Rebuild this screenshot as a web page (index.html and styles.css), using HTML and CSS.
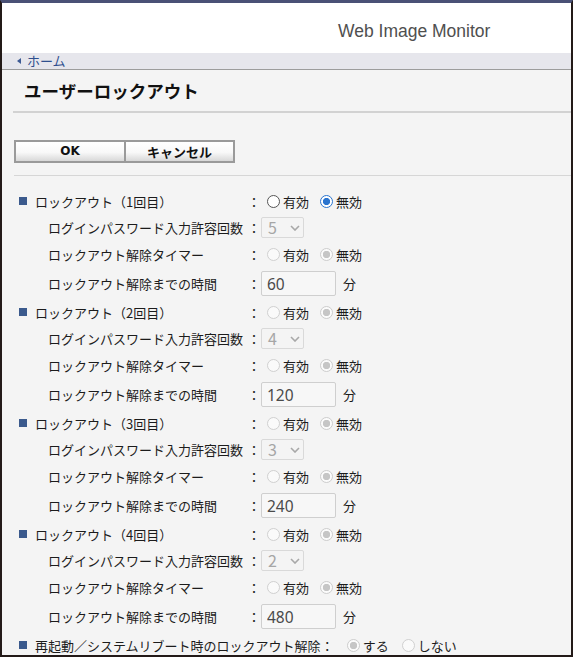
FILE: index.html
```html
<!DOCTYPE html>
<html lang="ja">
<head>
<meta charset="utf-8">
<title>ユーザーロックアウト</title>
<link rel="stylesheet" href="styles.css">
</head>
<body>
<div class="frame">
  <header class="top"><span class="brand">Web Image Monitor</span></header>
  <nav class="crumb"><span class="tri"></span><a class="home">ホーム</a></nav>
  <main class="content">
    <h1 class="title">ユーザーロックアウト</h1>
    <div class="buttons"><button class="btn ok">OK</button><button class="btn cancel">キャンセル</button></div>
    <div class="form">

      <section class="sec">
        <div class="row head"><span class="lbl">ロックアウト（1回目）</span><span class="colon">：</span>
          <span class="ctl"><label class="opt"><input type="radio" class="rd" name="l1"><span>有効</span></label><label class="opt"><input type="radio" class="rd" name="l1" checked><span>無効</span></label></span></div>
        <div class="row sub"><span class="lbl">ログインパスワード入力許容回数</span><span class="colon">：</span>
          <span class="ctl"><span class="sel">5<svg class="chev" viewBox="0 0 10 6" width="10" height="6"><path d="M1 1l4 4 4-4" fill="none" stroke="#a8a8a8" stroke-width="1.6"/></svg></span></span></div>
        <div class="row sub"><span class="lbl">ロックアウト解除タイマー</span><span class="colon">：</span>
          <span class="ctl"><label class="opt"><input type="radio" class="rd" name="t1" disabled><span>有効</span></label><label class="opt"><input type="radio" class="rd" name="t1" checked disabled><span>無効</span></label></span></div>
        <div class="row sub tall"><span class="lbl">ロックアウト解除までの時間</span><span class="colon">：</span>
          <span class="ctl"><input class="num" type="text" value="60"><span class="unit">分</span></span></div>
      </section>

      <section class="sec">
        <div class="row head"><span class="lbl">ロックアウト（2回目）</span><span class="colon">：</span>
          <span class="ctl"><label class="opt"><input type="radio" class="rd" name="l2" disabled><span>有効</span></label><label class="opt"><input type="radio" class="rd" name="l2" checked disabled><span>無効</span></label></span></div>
        <div class="row sub"><span class="lbl">ログインパスワード入力許容回数</span><span class="colon">：</span>
          <span class="ctl"><span class="sel">4<svg class="chev" viewBox="0 0 10 6" width="10" height="6"><path d="M1 1l4 4 4-4" fill="none" stroke="#a8a8a8" stroke-width="1.6"/></svg></span></span></div>
        <div class="row sub"><span class="lbl">ロックアウト解除タイマー</span><span class="colon">：</span>
          <span class="ctl"><label class="opt"><input type="radio" class="rd" name="t2" disabled><span>有効</span></label><label class="opt"><input type="radio" class="rd" name="t2" checked disabled><span>無効</span></label></span></div>
        <div class="row sub tall"><span class="lbl">ロックアウト解除までの時間</span><span class="colon">：</span>
          <span class="ctl"><input class="num" type="text" value="120"><span class="unit">分</span></span></div>
      </section>

      <section class="sec">
        <div class="row head"><span class="lbl">ロックアウト（3回目）</span><span class="colon">：</span>
          <span class="ctl"><label class="opt"><input type="radio" class="rd" name="l3" disabled><span>有効</span></label><label class="opt"><input type="radio" class="rd" name="l3" checked disabled><span>無効</span></label></span></div>
        <div class="row sub"><span class="lbl">ログインパスワード入力許容回数</span><span class="colon">：</span>
          <span class="ctl"><span class="sel">3<svg class="chev" viewBox="0 0 10 6" width="10" height="6"><path d="M1 1l4 4 4-4" fill="none" stroke="#a8a8a8" stroke-width="1.6"/></svg></span></span></div>
        <div class="row sub"><span class="lbl">ロックアウト解除タイマー</span><span class="colon">：</span>
          <span class="ctl"><label class="opt"><input type="radio" class="rd" name="t3" disabled><span>有効</span></label><label class="opt"><input type="radio" class="rd" name="t3" checked disabled><span>無効</span></label></span></div>
        <div class="row sub tall"><span class="lbl">ロックアウト解除までの時間</span><span class="colon">：</span>
          <span class="ctl"><input class="num" type="text" value="240"><span class="unit">分</span></span></div>
      </section>

      <section class="sec">
        <div class="row head"><span class="lbl">ロックアウト（4回目）</span><span class="colon">：</span>
          <span class="ctl"><label class="opt"><input type="radio" class="rd" name="l4" disabled><span>有効</span></label><label class="opt"><input type="radio" class="rd" name="l4" checked disabled><span>無効</span></label></span></div>
        <div class="row sub"><span class="lbl">ログインパスワード入力許容回数</span><span class="colon">：</span>
          <span class="ctl"><span class="sel">2<svg class="chev" viewBox="0 0 10 6" width="10" height="6"><path d="M1 1l4 4 4-4" fill="none" stroke="#a8a8a8" stroke-width="1.6"/></svg></span></span></div>
        <div class="row sub"><span class="lbl">ロックアウト解除タイマー</span><span class="colon">：</span>
          <span class="ctl"><label class="opt"><input type="radio" class="rd" name="t4" disabled><span>有効</span></label><label class="opt"><input type="radio" class="rd" name="t4" checked disabled><span>無効</span></label></span></div>
        <div class="row sub tall"><span class="lbl">ロックアウト解除までの時間</span><span class="colon">：</span>
          <span class="ctl"><input class="num" type="text" value="480"><span class="unit">分</span></span></div>
      </section>

      <div class="row head last"><span class="lbl auto">再起動／システムリブート時のロックアウト解除</span><span class="colon">：</span>
        <span class="ctl"><label class="opt"><input type="radio" class="rd" name="rb" checked disabled><span>する</span></label><label class="opt"><input type="radio" class="rd" name="rb" disabled><span>しない</span></label></span></div>

    </div>
  </main>
</div>
</body>
</html>
```
FILE: styles.css
```css
html, body {
  margin: 0;
  padding: 0;
  background: #f4f4f4;
}
body {
  font-family: "Noto Sans CJK JP", "Noto Sans", sans-serif;
  color: #1c1c1c;
  font-size: 13px;
}
.frame {
  width: 573px;
  height: 657px;
  box-sizing: border-box;
  border-left: 2px solid #231a18;
  border-right: 2px solid #231a18;
  border-bottom: 2px solid #231a18;
  border-top: 3px solid #4a5176;
  overflow: hidden;
  background: #f4f4f4;
}
.top {
  height: 44px;
  padding-top: 6px;
  background: #fff;
  display: flex;
  align-items: center;
  padding-left: 336px;
}
.brand {
  font-family: "Liberation Sans", Arial, sans-serif;
  font-size: 17.5px;
  color: #4f4f4f;
}
.crumb {
  height: 16px;
  background: #e6e6ec;
  border-bottom: 1px solid #9c9c9c;
  display: flex;
  align-items: center;
  padding-left: 15px;
  gap: 6px;
}
.tri {
  width: 0;
  height: 0;
  border-top: 3.5px solid transparent;
  border-bottom: 3.5px solid transparent;
  border-right: 4px solid #3d5a94;
}
.home {
  color: #2f4f8e;
  font-size: 13px;
  line-height: 16px;
}
.content {
  background: #f4f4f4;
}
.title {
  margin: 0 0 0 11px;
  height: 41px;
  line-height: 41px;
  padding-left: 11px;
  font-size: 17.5px;
  font-weight: bold;
  color: #111;
  border-bottom: 2px solid #d2d2d2;
}
.buttons {
  display: flex;
  margin: 27px 0 0 12px;
}
.btn {
  height: 23px;
  box-sizing: border-box;
  border: 2px solid #9a9a9a;
  background: linear-gradient(#ffffff 0%, #f8f8f8 55%, #d8d8d8 100%);
  font-family: "Noto Sans CJK JP", sans-serif;
  font-weight: bold;
  font-size: 13px;
  color: #111;
  padding: 0;
  line-height: 19px;
}
.ok {
  width: 112px;
  font-family: "DejaVu Sans", sans-serif;
  font-size: 12px;
}
.cancel {
  width: 111px;
  margin-left: -2px;
}
.form {
  margin: 12px 0 0 12px;
  border-top: 1px solid #d6d6d6;
  padding-top: 12px;
  margin-left: 12px;
}
.sec {
  display: flex;
  flex-direction: column;
}
.row {
  display: flex;
  align-items: center;
  height: 27px;
}
.row.head {
  height: 26px;
  padding-left: 5px;
}
.row.head::before {
  content: "";
  width: 8px;
  height: 8px;
  background: #3b5a8d;
  margin-right: 8px;
}
.row.sub {
  padding-left: 34px;
}
.row.tall {
  height: 31px;
}
.lbl {
  width: 212px;
  white-space: nowrap;
}
.sub .lbl {
  width: 199px;
}
.lbl.auto {
  width: auto;
}
.colon {
  width: 14px;
  text-align: center;
}
.ctl {
  display: flex;
  align-items: center;
}
.opt {
  display: flex;
  align-items: center;
  gap: 3px;
  margin-left: 6px;
}
.opt + .opt {
  margin-left: 11px;
}
.rd {
  appearance: none;
  -webkit-appearance: none;
  width: 13px;
  height: 13px;
  margin: 0;
  box-sizing: border-box;
  border: 1px solid #555;
  border-radius: 50%;
  background: #fff;
}
.rd:checked {
  border: 1.5px solid #2a74cf;
  background: radial-gradient(circle, #2a74cf 0 3.3px, #fff 3.9px);
}
.rd:disabled {
  border: 1px solid #d0d0d0;
  background: #fafafa;
}
.rd:disabled:checked {
  border: 1px solid #cdcdcd;
  background: radial-gradient(circle, #c6c6c6 0 3.4px, #fbfbfb 4px);
}
.sel {
  width: 43px;
  height: 21px;
  box-sizing: border-box;
  border: 1px solid #d9d9d9;
  border-radius: 2px;
  background: #f4f4f4;
  color: #a6a6a6;
  font-size: 16px;
  line-height: 19px;
  padding-left: 6px;
  display: flex;
  align-items: center;
  gap: 13px;
}
.chev {
  display: block;
}
.num {
  width: 75px;
  height: 25px;
  box-sizing: border-box;
  border: 1px solid #cfcfcf;
  border-radius: 2px;
  background: #f7f7f7;
  font-family: "Noto Sans", "Noto Sans CJK JP", sans-serif;
  font-size: 15.5px;
  color: #4a4a4a;
  padding: 0 0 0 5px;
  margin: 0;
}
.unit {
  margin-left: 7px;
}
.last .colon {
  width: 13px;
}
.last .opt {
  margin-left: 13px;
}
```
